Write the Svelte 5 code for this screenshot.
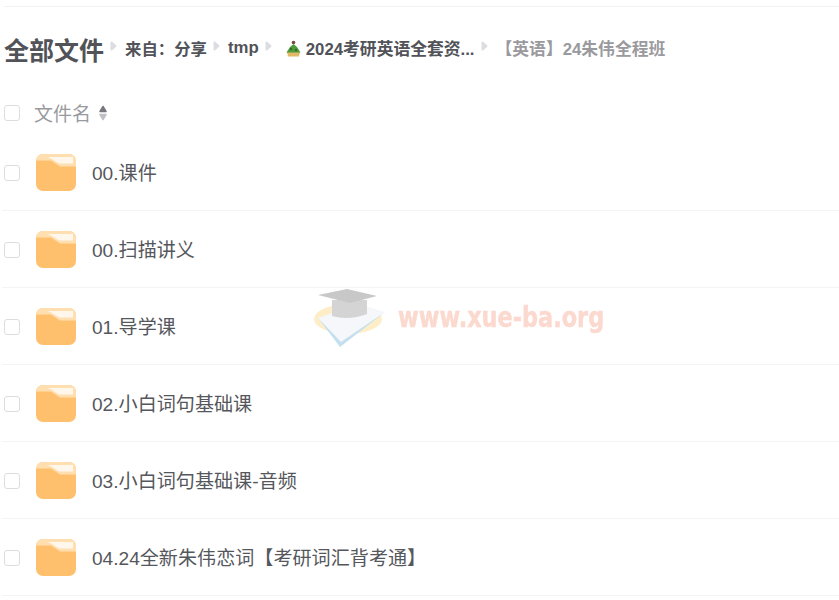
<script>
    const files = [
        '00.课件',
        '00.扫描讲义',
        '01.导学课',
        '02.小白词句基础课',
        '03.小白词句基础课-音频',
        '04.24全新朱伟恋词【考研词汇背考通】'
    ];
</script>

{#snippet arrow()}
    <svg class="sep" width="7" height="10" viewBox="0 0 7 10"><path d="M1.5 1.5 L5.5 5 L1.5 8.5 Z" fill="#dcdde0" stroke="#dcdde0" stroke-width="2" stroke-linejoin="round" /></svg>
{/snippet}

<div class="page">
    <div class="crumbs">
        <span class="title">全部文件</span>
        {@render arrow()}
        <span class="crumb from">来自：分享</span>
        {@render arrow()}
        <span class="crumb">tmp</span>
        {@render arrow()}
        <span class="crumb emoji">
            <svg width="17" height="17" viewBox="0 0 17 17">
                <path d="M2 12 H15 L14 16.5 H3 Z" fill="#e3b866" />
                <path d="M8.5 4 L12 7 L15.5 12.5 H1.5 L5 7 Z" fill="#4f9a3a" />
                <circle cx="8.5" cy="2.5" r="1.8" fill="#7a4a3a" />
                <circle cx="6" cy="9" r="1.2" fill="#2f6d2a" />
                <circle cx="11" cy="10" r="1.2" fill="#2f6d2a" />
            </svg>
            <span>2024考研英语全套资...</span>
        </span>
        {@render arrow()}
        <span class="crumb last">【英语】24朱伟全程班</span>
    </div>

    <div class="head">
        <span class="check"></span>
        <span class="head-name">文件名</span>
        <svg width="8" height="16" viewBox="0 0 8 16">
            <path d="M4 1.5 L7 6.5 H1 Z" fill="#77787c" stroke="#77787c" stroke-width="1.5" stroke-linejoin="round" />
            <path d="M1 9.5 H7 L4 14.5 Z" fill="#bfc0c4" stroke="#bfc0c4" stroke-width="1.5" stroke-linejoin="round" />
        </svg>
    </div>

    <div class="list">
        {#each files as name}
            <div class="row">
                <span class="check"></span>
                <svg class="folder" width="40" height="37" viewBox="0 0 40 37">
                    <rect width="40" height="37" rx="7" fill="#ffc06e" />
                    <path d="M7 0 H33 A7 7 0 0 1 40 7 V12.5 H24 L15 6.5 H0 A7 7 0 0 1 7 0 Z" fill="#ffdfb0" />
                    <path d="M12 3 H37 V9.5 H23 L15 4.5 Z" fill="#fff6ec" />
                </svg>
                <span class="name">{name}</span>
            </div>
        {/each}
    </div>

    <div class="mark">
        <svg width="74" height="62" viewBox="0 0 74 62">
            <ellipse cx="35" cy="31" rx="34" ry="15" fill="#fdeec8" />
            <path d="M5 30 L27 58 L72 24 L44 16 Z" fill="#f5f7fa" />
            <path d="M5 30 L27 59 L72 24 L28 54 Z" fill="#c4e0ee" />
            <path d="M19 12 H54 V26 Q36 33 19 28 Z" fill="#d4d4d4" />
            <path d="M5 7 L34 1 L64 8 L37 15 Z" fill="#c8c8c8" />
        </svg>
        <span class="mark-text">www.xue-ba.org</span>
    </div>
</div>

<style>
    :global(body) {
        margin: 0;
        background: #fff;
    }

    .page {
        position: relative;
        height: 600px;
        overflow: hidden;
        box-sizing: border-box;
        padding: 6px 0 0 4px;
        font-family: "Liberation Sans", "Noto Sans CJK SC", sans-serif;
        color: #515359;
    }

    .crumbs {
        display: flex;
        align-items: center;
        height: 83px;
        border-top: 1px solid #f1f2f4;
        white-space: nowrap;
    }

    .title {
        font-size: 25px;
        font-weight: 700;
    }

    .sep {
        margin: 0 8px 5px 6px;
        flex: none;
    }

    .crumb {
        font-size: 16.8px;
        font-weight: 700;
        margin-bottom: 1px;
    }

    .from {
        font-size: 16.4px;
    }

    .emoji {
        display: flex;
        align-items: center;
        gap: 4px;
        margin-left: 5px;
    }

    .last {
        color: #9a9a9e;
    }

    .head {
        display: flex;
        align-items: center;
        height: 42px;
        padding-top: 2px;
        color: #999a9e;
        font-size: 19px;
    }

    .head-name {
        margin: 0 8px 2px 14px;
    }

    .check {
        width: 14px;
        height: 14px;
        flex: none;
        border: 1px solid #dcdde0;
        border-radius: 3px;
        background: #fff;
    }

    .list {
        margin-left: -2px;
    }

    .row {
        display: flex;
        align-items: center;
        height: 76px;
        border-bottom: 1px solid #f3f4f6;
        padding-left: 2px;
    }

    .row .check {
        margin-top: 2px;
    }

    .folder {
        flex: none;
        margin: 0 16px;
    }

    .name {
        font-size: 19.1px;
        color: #55575c;
        margin-bottom: 1px;
    }

    .mark {
        position: absolute;
        left: 313px;
        top: 288px;
        display: flex;
        align-items: center;
        gap: 11px;
        filter: blur(0.4px);
    }

    .mark-text {
        font-family: "DejaVu Sans", sans-serif;
        font-size: 28px;
        font-weight: 700;
        color: #fbd9cf;
        -webkit-text-stroke: 0.5px #fbd9cf;
        transform: scaleX(0.8);
        transform-origin: left center;
        margin-bottom: 4px;
    }
</style>
